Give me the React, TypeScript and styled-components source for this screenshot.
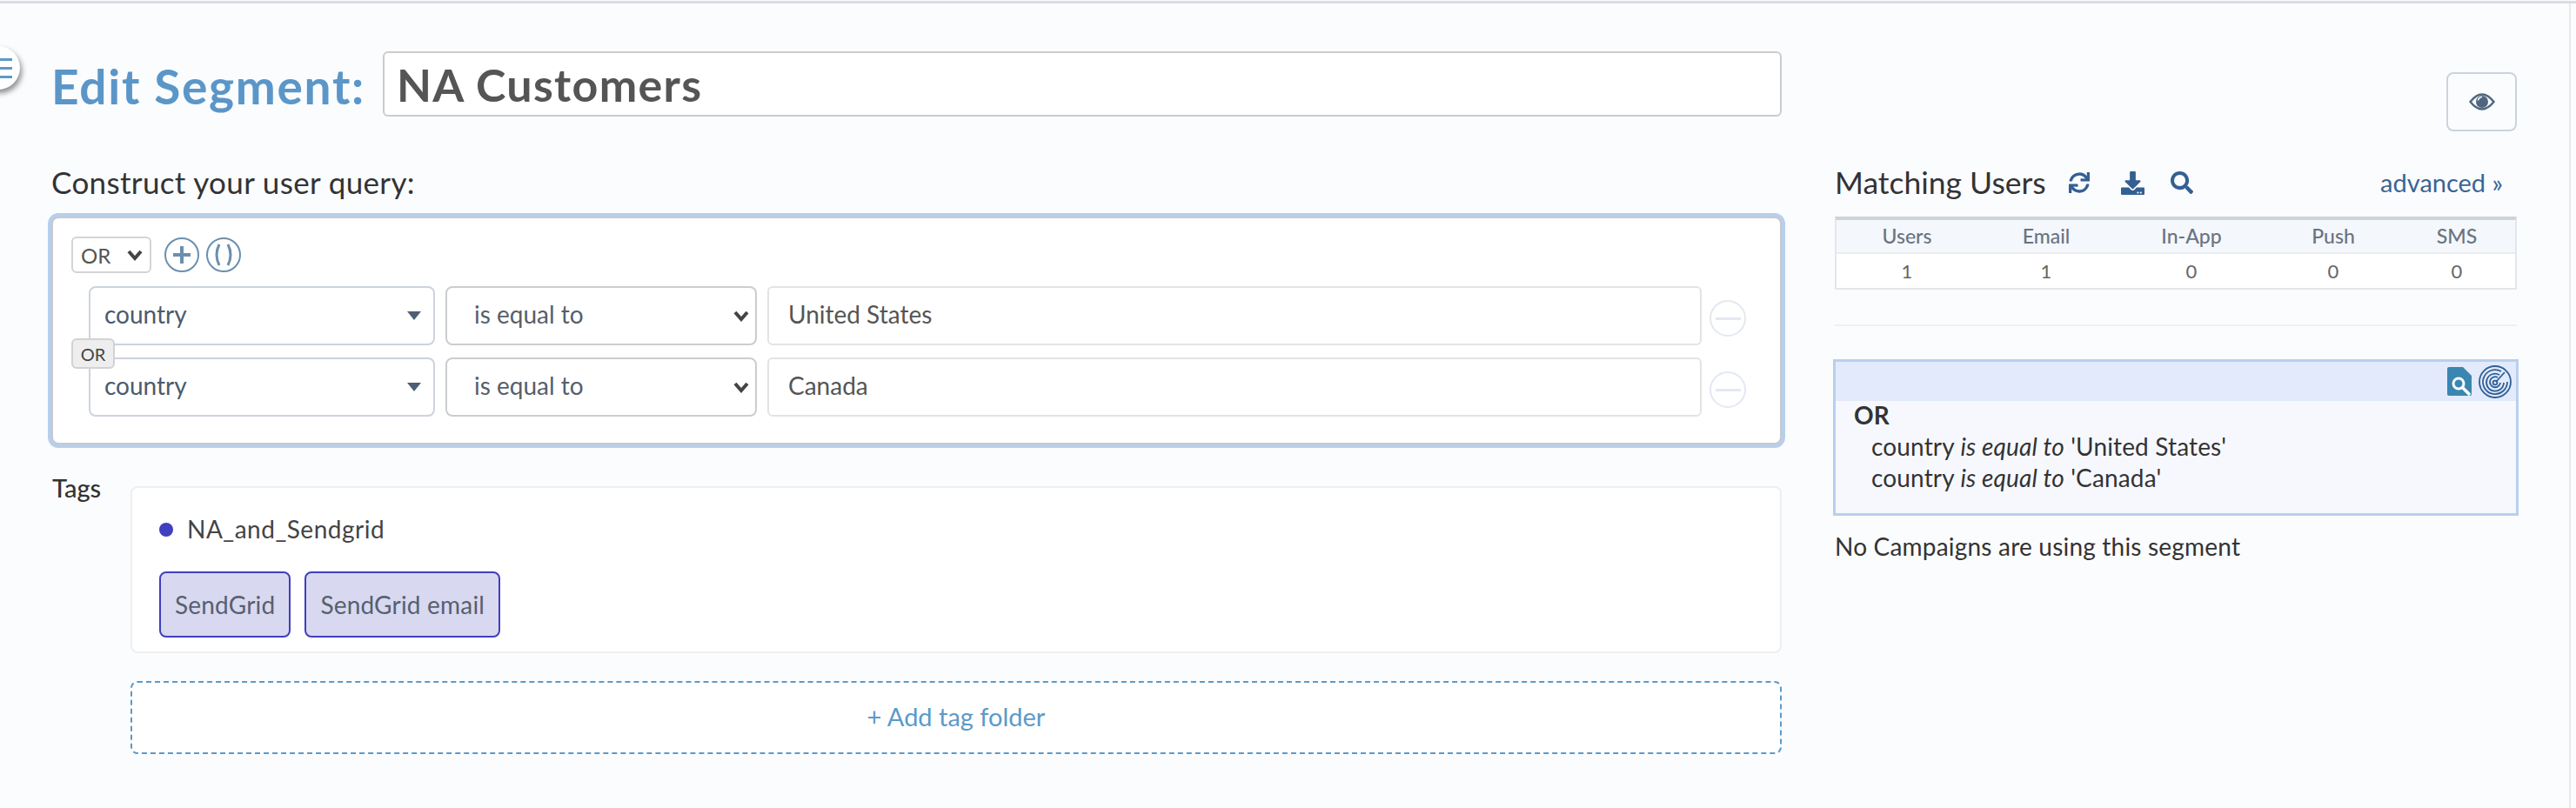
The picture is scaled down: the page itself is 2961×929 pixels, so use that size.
import React from "react";
import styled, { createGlobalStyle } from "styled-components";
import { FaSync, FaDownload, FaSearch } from "react-icons/fa";

const Global = createGlobalStyle`
  html, body { margin: 0; padding: 0; background: #fbfcfe; }
  body { font-family: "Lato", "Liberation Sans", sans-serif; }
  * { box-sizing: border-box; }
`;

const Page = styled.div`
  position: relative;
  width: 2961px;
  height: 929px;
  overflow: hidden;
  background: #fbfcfe;
  padding-top: 1px;
`;
const TopLine = styled.div`
  height: 3px;
  background: #d8dde3;
`;
const ScrollTrack = styled.div`
  position: absolute;
  right: 0;
  top: 4px;
  bottom: 0;
  width: 8px;
  background: #fcfcfc;
  border-left: 2px solid #e8e8e8;
`;
const MenuBubble = styled.div`
  position: absolute;
  left: -27px;
  top: 53px;
  width: 50px;
  height: 50px;
  border-radius: 50%;
  background: #fff;
  box-shadow: 2px 4px 6px rgba(0, 0, 0, 0.45);
  display: flex;
  flex-direction: column;
  justify-content: center;
  align-items: flex-end;
  gap: 7px;
  padding-right: 9px;
`;
const MenuLine = styled.span`
  display: block;
  width: 18px;
  height: 3px;
  background: #5b9ac9;
`;
const Columns = styled.div`
  display: grid;
  grid-template-columns: 1989px 784px;
  column-gap: 61px;
  padding-left: 59px;
`;
const LeftCol = styled.div`
  display: flex;
  flex-direction: column;
`;
const TitleRow = styled.div`
  display: flex;
  align-items: center;
  height: 75px;
  margin-top: 55px;
`;
const Title = styled.h1`
  margin: 6px 0 0 0;
  font-size: 55px;
  font-weight: 700;
  letter-spacing: 1.7px;
  color: #5b96c8;
  line-height: 1;
  white-space: nowrap;
  width: 381px;
`;
const NameInput = styled.div`
  flex: 1;
  height: 75px;
  background: #fff;
  border: 2px solid #ccc;
  border-radius: 6px;
  padding-left: 14px;
  display: flex;
  align-items: center;
  font-size: 52px;
  letter-spacing: 1.3px;
  font-weight: 700;
  color: #555;
`;
const SectionLabel = styled.div`
  height: 115px;
  display: flex;
  align-items: flex-end;
  padding: 0 0 20px 0;
  font-size: 35px;
  letter-spacing: 0.35px;
  line-height: 40px;
  color: #333;
`;
const QueryBox = styled.div`
  position: relative;
  background: #fff;
  border: 2px solid #c8c9cc;
  border-radius: 8px;
  box-shadow: 0 0 0 4px #b8cfec;
  padding: 21px 39px 30px 21px;
`;
const QueryToolbar = styled.div`
  display: flex;
  align-items: center;
  height: 42px;
  gap: 8px;
`;
const CombinatorSelect = styled.div`
  width: 92px;
  height: 42px;
  border: 2px solid #d4d4d4;
  border-radius: 6px;
  background: #fff;
  display: flex;
  align-items: center;
  justify-content: space-between;
  padding: 0 8px 0 9px;
  font-size: 24px;
  color: #555;
  margin-right: 7px;
`;
const CircleButton = styled.div`
  width: 40px;
  height: 40px;
  border: 2px solid #6b8fae;
  border-radius: 50%;
  display: flex;
  align-items: center;
  justify-content: center;
  color: #6b8fae;
`;
const Rows = styled.div`
  position: relative;
  display: flex;
  flex-direction: column;
  gap: 14px;
  margin-top: 15px;
  padding-left: 20px;
`;
const Row = styled.div`
  display: flex;
  align-items: center;
  gap: 12px;
`;
const FieldText = styled.span`
  padding-bottom: 4px;
`;
const FieldSelect = styled.div`
  width: 398px;
  height: 68px;
  background: #fff;
  border: 2px solid #ccd3dc;
  border-radius: 8px;
  display: flex;
  align-items: center;
  justify-content: space-between;
  padding: 0 14px 0 16px;
  font-size: 28px;
  color: #4a5a6e;
`;
const OperatorSelect = styled.div`
  width: 358px;
  height: 68px;
  background: #fff;
  border: 2px solid #cbcdd0;
  border-radius: 8px;
  display: flex;
  align-items: center;
  justify-content: space-between;
  padding: 0 7px 0 31px;
  font-size: 28px;
  color: #555f6b;
`;
const ValueInput = styled.div`
  flex: 1;
  height: 68px;
  background: #fff;
  border: 2px solid #e3e3e3;
  border-radius: 6px;
  display: flex;
  align-items: center;
  padding-left: 22px;
  font-size: 28px;
  color: #555;
`;
const RemoveButton = styled.div`
  width: 42px;
  height: 42px;
  margin: 6px 0 0 -3px;
  border: 2px solid #e3e8f2;
  border-radius: 50%;
  display: flex;
  align-items: center;
  justify-content: center;
  &::before {
    content: "";
    width: 29px;
    height: 3px;
    background: #e3e8f2;
  }
`;
const OrBadge = styled.div`
  position: absolute;
  left: 0;
  top: 60px;
  width: 50px;
  height: 35px;
  background: #eee;
  border: 2px solid #d2d2d2;
  border-radius: 6px;
  display: flex;
  align-items: center;
  justify-content: center;
  font-size: 20px;
  color: #444;
`;
const TagsRow = styled.div`
  display: grid;
  grid-template-columns: 91px 1fr;
  margin-top: 48px;
`;
const TagsLabel = styled.div`
  padding: 0 0 0 1px;
  font-size: 29px;
  font-weight: 500;
  line-height: 34px;
  margin-top: -15px;
  color: #333;
`;
const TagsBox = styled.div`
  height: 192px;
  background: #fff;
  border: 2px solid #eeeff2;
  border-radius: 8px;
  padding: 0 31px;
`;
const FolderName = styled.div`
  display: flex;
  align-items: center;
  height: 96px;
  gap: 16px;
  font-size: 28px;
  letter-spacing: 0.5px;
  color: #444;
`;
const FolderText = styled.span`
  padding-bottom: 3px;
`;
const Dot = styled.span`
  width: 16px;
  height: 16px;
  border-radius: 50%;
  background: #3f3fbf;
`;
const Chips = styled.div`
  display: flex;
  gap: 16px;
`;
const Chip = styled.div`
  height: 76px;
  padding: 0 16px;
  min-width: 150px;
  display: flex;
  align-items: center;
  justify-content: center;
  background: #d8d8f0;
  border: 2px solid #3f3fbf;
  border-radius: 8px;
  font-size: 28px;
  letter-spacing: 0.2px;
  color: #56606f;
`;
const AddFolder = styled.div`
  margin: 32px 0 0 91px;
  height: 84px;
  background: #fff;
  border: 2px dashed #5c9ac9;
  border-radius: 8px;
  display: flex;
  align-items: center;
  justify-content: center;
  font-size: 29px;
  color: #5b9ac9;
  padding-bottom: 3px;
`;
const RightCol = styled.div`
  display: flex;
  flex-direction: column;
`;
const EyeButton = styled.div`
  align-self: flex-end;
  width: 81px;
  height: 68px;
  margin-top: 79px;
  border: 2px solid #ccd3dc;
  border-radius: 8px;
  display: flex;
  align-items: center;
  justify-content: center;
`;
const MatchHeader = styled.div`
  height: 98px;
  display: flex;
  align-items: flex-end;
  padding-bottom: 18px;
`;
const MatchTitle = styled.div`
  font-size: 35.5px;
  line-height: 42px;
  color: #333;
  width: 269px;
  white-space: nowrap;
`;
const MatchIcons = styled.div`
  display: flex;
  gap: 33px;
  color: #345f92;
  height: 42px;
  align-items: center;
`;
const DownloadIcon = styled(FaDownload)`
  margin: 0 -3px 0 3px;
`;
const Advanced = styled.a`
  margin-left: auto;
  margin-right: 16px;
  font-size: 29px;
  line-height: 42px;
  color: #3a6595;
`;
const Stats = styled.div`
  display: grid;
  grid-template-columns: 162px 158px 176px 150px 1fr;
  border: 2px solid #e3e6ea;
  border-top: 4px solid #ced2d9;
  text-align: center;
`;
const StatHead = styled.div`
  height: 39px;
  background: #f4f7fc;
  border-bottom: 2px solid #e9edf2;
  font-size: 23px;
  font-weight: 500;
  color: #6a7380;
  line-height: 37px;
`;
const StatCell = styled.div`
  height: 39px;
  background: #fff;
  font-size: 22px;
  color: #666;
  line-height: 39px;
`;
const Divider = styled.div`
  height: 2px;
  background: #eef0f3;
  margin-top: 40px;
`;
const Preview = styled.div`
  margin: 38px -2px 0 -2px;
  height: 180px;
  border: 3px solid #b8d0ee;
  background: #f6f8fe;
`;
const PreviewBar = styled.div`
  height: 45px;
  background: #e2eafb;
  display: flex;
  align-items: center;
  justify-content: flex-end;
  padding-right: 5px;
  gap: 8px;
`;
const PreviewBody = styled.div`
  margin-top: -2px;
  padding-left: 21px;
  color: #333;
  font-size: 28px;
  line-height: 36px;
  letter-spacing: 0.15px;
`;
const PreviewOp = styled.div`
  font-weight: 700;
`;
const PreviewRule = styled.div`
  padding-left: 20px;
`;
const NoCampaigns = styled.div`
  margin-top: 17px;
  font-size: 28px;
  letter-spacing: 0.2px;
  line-height: 36px;
  color: #333;
`;

const Chevron = () => (
  <svg width="18" height="14" viewBox="0 0 18 14" fill="none">
    <path d="M2 3 L9 11 L16 3" stroke="#444" strokeWidth="4" />
  </svg>
);
const Triangle = () => (
  <svg width="16" height="10" viewBox="0 0 16 10">
    <path d="M0 0 H16 L8 10 Z" fill="#4f5f73" />
  </svg>
);
const Eye = () => (
  <svg width="30" height="20" viewBox="0 0 30 20" fill="none">
    <path d="M1.5 10 Q15 -7 28.5 10 Q15 27 1.5 10 Z" stroke="#4f6580" strokeWidth="2.4" />
    <circle cx="15" cy="10" r="7" fill="#4f6580" />
    <path d="M10.5 8.5 Q11 5 15 4.5" stroke="#fff" strokeWidth="1.6" />
  </svg>
);
const DocSearch = () => (
  <svg width="28" height="34" viewBox="0 0 28 34">
    <path d="M2 0 H18 L28 10 V31 Q28 33 26 33 H2 Q0 33 0 31 V2 Q0 0 2 0 Z" fill="#3a86b0" />
    <circle cx="13" cy="19" r="6" fill="none" stroke="#fff" strokeWidth="3" />
    <path d="M18 24 L26 32" stroke="#fff" strokeWidth="3.5" />
  </svg>
);
const Radar = () => (
  <svg width="38" height="38" viewBox="0 0 38 38" fill="none" stroke="#2e5f96" strokeWidth="1.8">
    <circle cx="19" cy="19" r="18" />
    <path d="M26 7 A14 14 0 1 0 33 19" />
    <path d="M24 11 A10 10 0 1 0 29 20" />
    <path d="M22 14 A6 6 0 1 0 25 20" />
    <circle cx="19" cy="20" r="2.4" />
    <path d="M20 19 L30 8" />
  </svg>
);

const rules = ["United States", "Canada"];
const heads = ["Users", "Email", "In-App", "Push", "SMS"];
const values = [1, 1, 0, 0, 0];

export default function App() {
  return (
    <Page>
      <Global />
      <TopLine />
      <ScrollTrack />
      <MenuBubble>
        <MenuLine />
        <MenuLine />
        <MenuLine />
      </MenuBubble>
      <Columns>
        <LeftCol>
          <TitleRow>
            <Title>Edit Segment:</Title>
            <NameInput>NA Customers</NameInput>
          </TitleRow>
          <SectionLabel>Construct your user query:</SectionLabel>
          <QueryBox>
            <QueryToolbar>
              <CombinatorSelect>
                OR
                <Chevron />
              </CombinatorSelect>
              <CircleButton>
                <svg width="24" height="24" viewBox="0 0 24 24">
                  <path d="M12 2 V22 M2 12 H22" stroke="#6b8fae" strokeWidth="4" />
                </svg>
              </CircleButton>
              <CircleButton>
                <svg width="24" height="26" viewBox="0 0 24 26" fill="none">
                  <path d="M7 1 Q1 13 7 25 M17 1 Q23 13 17 25" stroke="#6b8fae" strokeWidth="3" />
                </svg>
              </CircleButton>
            </QueryToolbar>
            <Rows>
              {rules.map((value) => (
                <Row key={value}>
                  <FieldSelect>
                    <FieldText>country</FieldText>
                    <Triangle />
                  </FieldSelect>
                  <OperatorSelect>
                    <FieldText>is equal to</FieldText>
                    <Chevron />
                  </OperatorSelect>
                  <ValueInput>
                    <FieldText>{value}</FieldText>
                  </ValueInput>
                  <RemoveButton />
                </Row>
              ))}
              <OrBadge>OR</OrBadge>
            </Rows>
          </QueryBox>
          <TagsRow>
            <TagsLabel>Tags</TagsLabel>
            <TagsBox>
              <FolderName>
                <Dot />
                <FolderText>NA_and_Sendgrid</FolderText>
              </FolderName>
              <Chips>
                <Chip>SendGrid</Chip>
                <Chip>SendGrid email</Chip>
              </Chips>
            </TagsBox>
          </TagsRow>
          <AddFolder>+ Add tag folder</AddFolder>
        </LeftCol>
        <RightCol>
          <EyeButton>
            <Eye />
          </EyeButton>
          <MatchHeader>
            <MatchTitle>Matching Users</MatchTitle>
            <MatchIcons>
              <FaSync size={24} />
              <DownloadIcon size={27} />
              <FaSearch size={26} />
            </MatchIcons>
            <Advanced>advanced »</Advanced>
          </MatchHeader>
          <Stats>
            {heads.map((h) => (
              <StatHead key={h}>{h}</StatHead>
            ))}
            {values.map((v, i) => (
              <StatCell key={i}>{v}</StatCell>
            ))}
          </Stats>
          <Divider />
          <Preview>
            <PreviewBar>
              <DocSearch />
              <Radar />
            </PreviewBar>
            <PreviewBody>
              <PreviewOp>OR</PreviewOp>
              {rules.map((value) => (
                <PreviewRule key={value}>
                  country <em>is equal to</em> '{value}'
                </PreviewRule>
              ))}
            </PreviewBody>
          </Preview>
          <NoCampaigns>No Campaigns are using this segment</NoCampaigns>
        </RightCol>
      </Columns>
    </Page>
  );
}
